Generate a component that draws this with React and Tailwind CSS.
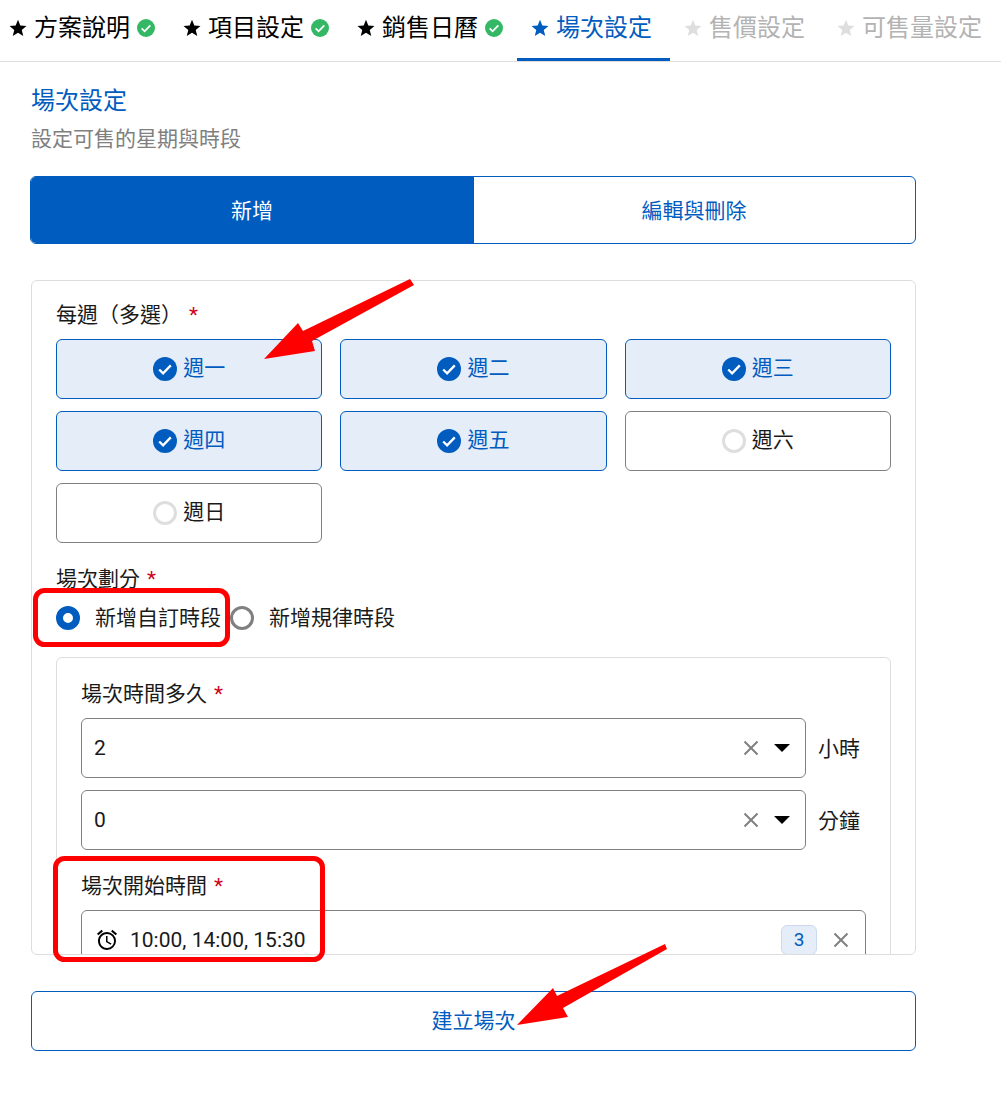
import { MdOutlineAccessAlarm } from 'react-icons/md'

const STEPS = [
  { label: '方案說明', state: 'done' },
  { label: '項目設定', state: 'done' },
  { label: '銷售日曆', state: 'done' },
  { label: '場次設定', state: 'active' },
  { label: '售價設定', state: 'todo' },
  { label: '可售量設定', state: 'todo' },
]

const DAYS = [
  { label: '週一', on: true },
  { label: '週二', on: true },
  { label: '週三', on: true },
  { label: '週四', on: true },
  { label: '週五', on: true },
  { label: '週六', on: false },
  { label: '週日', on: false },
]

function Star({ className }) {
  return (
    <svg viewBox="0 0 24 24" className={className} fill="currentColor">
      <path d="M12 1l3.1 7.6 8.2.6-6.3 5.3 2 8L12 18.2 5 22.500l2-8L.700 9.200l8.200-.6z" />
    </svg>
  )
}

function CheckCircle({ className }) {
  return (
    <svg viewBox="0 0 24 24" className={className}>
      <circle cx="12" cy="12" r="12" fill="currentColor" />
      <path d="M6.200 12.500l3.900 3.900 7.700-8" fill="none" stroke="#fff" strokeWidth="2.300" />
    </svg>
  )
}

function Step({ label, state }) {
  if (state === 'active') {
    return (
      <div className="flex h-[61px] w-[153px] shrink-0 items-center gap-[7px] border-b-[3px] border-[#005cbf] pb-[3px] pl-[14px] text-[#005cbf]">
        <Star className="h-[18px] w-[18px] shrink-0" />
        <span>{label}</span>
      </div>
    )
  }
  const done = state === 'done'
  return (
    <div className={`flex h-[61px] shrink-0 items-center pb-[6px] pl-[14px] ${done ? 'w-[174px] text-black' : 'w-[153px] text-[#b3b3b3]'}`}>
      <Star className={`h-[18px] w-[18px] shrink-0 ${done ? 'text-black' : 'text-[#dedede]'}`} />
      <span className="ml-[7px] whitespace-nowrap">{label}</span>
      {done && <CheckCircle className="ml-[7px] h-[18px] w-[18px] shrink-0 text-[#34b866]" />}
    </div>
  )
}

function Label({ children, gap = 'ml-[7px]' }) {
  return (
    <div className="flex h-[28px] items-center pt-[1px] text-[21px] leading-[28px] text-[#1a1a1a]">
      <span>{children}</span>
      <span className={`${gap} text-[#d0021b]`}>*</span>
    </div>
  )
}

function DayButton({ label, on }) {
  return (
    <div className={`flex h-[60px] items-center justify-center gap-[6px] rounded-[6px] border text-[21px] ${on ? 'border-[#005cbf] bg-[#e5edf8] text-[#005cbf]' : 'border-[#808080] bg-white text-[#1a1a1a]'}`}>
      {on ? (
        <CheckCircle className="h-[24px] w-[24px] text-[#005cbf]" />
      ) : (
        <span className="h-[24px] w-[24px] rounded-full border-[3px] border-[#dedede]" />
      )}
      <span>{label}</span>
    </div>
  )
}

function XIcon() {
  return (
    <svg viewBox="0 0 16 16" className="h-[16px] w-[16px] shrink-0" fill="none" stroke="#808080" strokeWidth="2">
      <path d="M1.500 1.500l13 13M14.500 1.500l-13 13" />
    </svg>
  )
}

function SelectRow({ value, unit }) {
  return (
    <div className="flex items-center gap-[12px]">
      <div className="flex h-[60px] w-[725px] items-center rounded-[6px] border border-[#808080] pl-[12px] pr-[15px] text-[21px] text-[#1a1a1a]">
        <span className="flex-1 pt-[1px]">{value}</span>
        <XIcon />
        <svg viewBox="0 0 16 8" className="ml-[15px] h-[8px] w-[16px]" fill="#000">
          <path d="M0 0h16L8 8z" />
        </svg>
      </div>
      <span className="pt-[3px] text-[21px] text-[#1a1a1a]">{unit}</span>
    </div>
  )
}

function Radio({ label, on }) {
  return (
    <div className="flex items-center gap-[15px] text-[21px] text-[#1a1a1a]">
      <span className={`h-[24px] w-[24px] rounded-full ${on ? 'border-[7px] border-[#005cbf]' : 'border-[3px] border-[#808080]'}`} />
      <span className="pt-[2px]">{label}</span>
    </div>
  )
}

// red markup drawn over the screenshot
function Annotations() {
  return (
    <svg className="pointer-events-none absolute left-0 top-0 h-[1114px] w-[1001px]" viewBox="0 0 1001 1114">
      <rect x="35.500" y="590.500" width="192" height="54" rx="9" fill="none" stroke="#ff0000" strokeWidth="5" />
      <rect x="55.500" y="858.500" width="267" height="101" rx="9" fill="none" stroke="#ff0000" strokeWidth="5" />
      <polygon fill="#ff0000" points="264,359 298,323 303,331 410,279 414,285 312,341 315,351" />
      <polygon fill="#ff0000" points="517,1025 553,988 557,996 665,944 667,949 563,1008 568,1017" />
    </svg>
  )
}

export default function App() {
  return (
    <div className="relative h-[1114px] w-[1001px] overflow-hidden bg-white font-['Roboto','Noto_Sans_CJK_TC',sans-serif]">
      {/* steps */}
      <div className="flex h-[62px] border-b border-[#dddddd] text-[24px] leading-[32px]">
        <div className="-ml-[5px] flex">
          {STEPS.map((s) => (
            <Step key={s.label} {...s} />
          ))}
        </div>
      </div>

      <div className="w-[916px] pl-[31px]">
        <h1 className="mt-[23px] text-[24px] font-normal leading-[32px] text-[#005cbf]">場次設定</h1>
        <p className="mt-[8px] text-[21px] leading-[28px] text-[#808080]">設定可售的星期與時段</p>

        {/* mode switch */}
        <div className="-ml-[1px] mt-[23px] flex h-[68px] overflow-hidden rounded-[6px] border border-[#005cbf] text-[21px]">
          <div className="flex w-[443px] items-center justify-center bg-[#005cbf] pr-[1px] pt-[4px] text-white">新增</div>
          <div className="flex flex-1 items-center justify-center pr-[1px] pt-[4px] text-[#005cbf]">編輯與刪除</div>
        </div>

        <div className="mt-[36px] h-[675px] overflow-hidden rounded-[6px] border border-[#dddddd] px-[24px] pt-[19px]">
          <Label>每週（多選）</Label>
          <div className="mt-[11px] grid grid-cols-3 gap-x-[18px] gap-y-[12px]">
            {DAYS.map((d) => (
              <DayButton key={d.label} {...d} />
            ))}
          </div>

          <div className="mt-[21px]">
            <Label>場次劃分</Label>
          </div>
          <div className="mt-[4px] flex h-[44px] items-center gap-[9px]">
            <Radio label="新增自訂時段" on />
            <Radio label="新增規律時段" />
          </div>

          <div className="mt-[17px] rounded-[6px] border border-[#dddddd] px-[24px] pt-[21px]">
            <Label>場次時間多久</Label>
            <div className="mt-[11px] flex flex-col gap-[12px]">
              <SelectRow value="2" unit="小時" />
              <SelectRow value="0" unit="分鐘" />
            </div>
            <div className="mt-[21px]">
              <Label>場次開始時間</Label>
            </div>
            <div className="mt-[11px] flex h-[60px] items-center rounded-[6px] border border-[#808080] pl-[13px] pr-[16px] text-[21px] text-[#1a1a1a]">
              <MdOutlineAccessAlarm className="h-[24px] w-[24px] shrink-0 text-black" />
              <span className="ml-[11px] flex-1 pt-[1px]">10:00, 14:00, 15:30</span>
              <span className="flex h-[30px] w-[36px] items-center justify-center rounded-[6px] border border-[#c9daf0] bg-[#e5edf8] text-[19px] text-[#005cbf]">3</span>
              <span className="ml-[16px]">
                <XIcon />
              </span>
            </div>
          </div>
        </div>

        <div className="mt-[36px] flex h-[60px] items-center justify-center rounded-[6px] border border-[#005cbf] pt-[2px] text-[21px] text-[#005cbf]">建立場次</div>
      </div>

      <Annotations />
    </div>
  )
}
